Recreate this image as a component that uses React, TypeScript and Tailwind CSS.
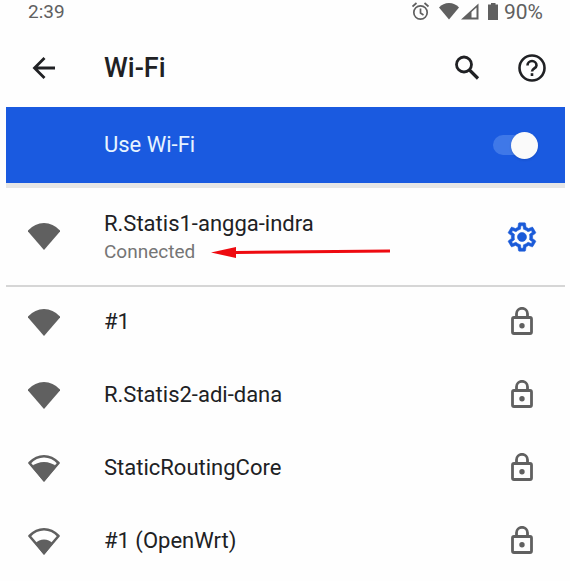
import React, { useState } from "react";

type Level = 2 | 3 | 4;

function WifiIcon({ level }: { level: Level }) {
  return (
    <svg className="w-8 shrink-0 text-[#606060]" viewBox="0 0 32 27" fill="currentColor" aria-hidden="true">
      {level === 4 && <path d="M16 27 0 8.500V7.500Q7 0 16 0t16 7.500V8.500Z" />}
      {level !== 4 && (
        <path d="M16 25 1.500 8Q8 1.300 16 1.300T30.500 8Z" fill="none" stroke="currentColor" strokeWidth="2.600" strokeLinejoin="round" />
      )}
      {level === 3 && <path d="M16 27 3.500 11.500Q9 7 16 7t12.500 4.500Z" />}
      {level === 2 && <path d="M16 27 7 15.500Q11 11.500 16 11.500t9 4Z" />}
    </svg>
  );
}

function LockIcon() {
  return (
    <svg className="mb-0.5 h-7 w-[22px] shrink-0 text-[#606060]" viewBox="0 0 22 28" fill="none" stroke="currentColor" strokeWidth="2.800" aria-hidden="true">
      <rect x="1.500" y="10.500" width="19" height="16" rx="1.500" />
      <path d="M5.500 10V6.800a5.500 5.500 0 0 1 11 0V10" />
      <circle cx="11" cy="18.800" r="2.700" fill="currentColor" stroke="none" />
    </svg>
  );
}

function GearIcon() {
  return (
    <svg className="size-[34px]" viewBox="0 0 24 24" fill="currentColor" stroke="currentColor" strokeWidth="0.400" aria-hidden="true">
      <path d="M19.430 12.980c.04-.32.070-.64.070-.98 0-.34-.03-.66-.07-.98l2.110-1.650c.19-.15.240-.42.120-.64l-2-3.460c-.09-.16-.26-.25-.44-.25-.06 0-.12.010-.17.030l-2.490 1c-.52-.4-1.080-.73-1.690-.98l-.38-2.650C14.460 2.180 14.250 2 14 2h-4c-.25 0-.46.180-.49.420l-.38 2.650c-.61.250-1.170.590-1.690.980l-2.490-1c-.06-.02-.12-.03-.18-.03-.17 0-.34.090-.43.250l-2 3.460c-.13.220-.07.490.120.640l2.110 1.650c-.04.320-.07.650-.07.980 0 .33.030.66.070.98l-2.110 1.650c-.19.150-.24.420-.12.640l2 3.460c.09.160.26.250.44.250.06 0 .12-.01.170-.03l2.490-1c.52.4 1.080.73 1.690.98l.38 2.650c.03.240.24.420.49.420h4c.25 0 .46-.18.490-.42l.38-2.650c.61-.25 1.170-.59 1.690-.98l2.490 1c.06.020.12.030.18.030.17 0 .34-.09.430-.25l2-3.460c.12-.22.070-.49-.12-.64l-2.110-1.650zm-1.980-1.710c.04.310.05.520.05.730 0 .21-.02.430-.05.730l-.14 1.130.89.700 1.080.84-.7 1.210-1.270-.51-1.040-.42-.9.680c-.43.320-.84.560-1.250.73l-1.060.43-.16 1.130-.2 1.350h-1.400l-.19-1.350-.16-1.130-1.060-.43c-.43-.18-.83-.41-1.230-.71l-.91-.7-1.060.43-1.270.51-.7-1.210 1.080-.84.89-.7-.14-1.130c-.03-.31-.05-.54-.05-.74s.020-.43.050-.73l.14-1.130-.89-.7-1.080-.84.700-1.210 1.270.51 1.040.42.900-.68c.43-.32.840-.56 1.250-.73l1.060-.43.160-1.130.200-1.350h1.390l.19 1.350.16 1.130 1.060.43c.43.180.83.410 1.230.71l.91.700 1.060-.43 1.270-.51.700 1.210-1.070.85-.89.700.14 1.130z" />
      <circle cx="12" cy="12" r="3.200" />
    </svg>
  );
}

function StatusIcons() {
  return (
    <svg className="h-5 w-[88px]" viewBox="0 0 88 20" fill="none" aria-hidden="true">
      <g stroke="currentColor" strokeWidth="1.700">
        <circle cx="8.500" cy="10.500" r="6.700" />
        <path d="M8.500 6.500V11l3 2M.5 4.500l4-3.500M16.500 4.500l-4-3.500" />
      </g>
      <g fill="currentColor">
        <path d="M37 17.500 27 5.500Q31 1 37 1t10 4.500Z" />
        <path d="M66.500 1.500v16H49ZM64.500 5.500 59.500 10v5.500h5Z" fillRule="evenodd" />
        <path d="M79 1h4.500v1.500H86V18H76V2.500h3Z" />
      </g>
    </svg>
  );
}

const networks: { name: string; level: Level }[] = [
  { name: "#1", level: 4 },
  { name: "R.Statis2-adi-dana", level: 4 },
  { name: "StaticRoutingCore", level: 3 },
  { name: "#1 (OpenWrt)", level: 2 },
];

export default function App() {
  const [enabled, setEnabled] = useState(true);
  return (
    <main className="min-h-screen bg-[#fefefe] pr-[5px] pl-1.5 font-['Roboto',sans-serif] text-[22px] leading-7 text-[#202124]">
      <div className="flex h-[29px] items-start justify-between pr-[22px] pl-[22px] text-[19px] leading-6 text-[#606060]">
        <span>2:39</span>
        <span className="flex items-center gap-1 text-[21px]">
          <StatusIcons />
          <span>90%</span>
        </span>
      </div>

      <header className="flex h-[78px] items-center pr-[19px] pl-[22px]">
        <button type="button" aria-label="Back" className="w-[76px]">
          <svg className="size-8" viewBox="0 0 32 32" fill="none" stroke="currentColor" strokeWidth="2.800" aria-hidden="true">
            <path d="M27 16H7M16.500 6 6.500 16l10 10" />
          </svg>
        </button>
        <h1 className="flex-1 text-[27px] leading-8 font-medium">Wi-Fi</h1>
        <button type="button" aria-label="Search" className="mr-[38px]">
          <svg className="size-[26px]" viewBox="0 0 26 26" fill="none" stroke="currentColor" strokeWidth="2.800" aria-hidden="true">
            <circle cx="10" cy="9.500" r="7.500" />
            <path d="m15 14.500 9 9" strokeWidth="3.200" />
          </svg>
        </button>
        <button type="button" aria-label="Help">
          <svg className="size-7" viewBox="0 0 28 28" fill="none" stroke="currentColor" strokeWidth="2.600" aria-hidden="true">
            <circle cx="14" cy="14" r="12.500" />
            <path d="M9.500 11.500a4.500 4.500 0 1 1 9 0c0 2.800-4.500 3-4.500 6" />
            <path d="M14 19.200v2.800" />
          </svg>
        </button>
      </header>

      <label className="flex h-[76px] items-center justify-between bg-[#1a5ae0] pr-[26px] pl-[98px] text-[#e8f4ff]">
        <span>Use Wi-Fi</span>
        <span className="flex h-7 w-[46px] items-center">
          <input
            type="checkbox"
            role="switch"
            checked={enabled}
            onChange={(e) => setEnabled(e.target.checked)}
            className="peer sr-only"
          />
          <span className="flex h-5 w-10 items-center rounded-full bg-[#3f78e8] pl-0 peer-checked:pl-[18px]">
            <span className="size-[27px] shrink-0 rounded-full bg-[#fafafa] shadow" />
          </span>
        </span>
      </label>

      <section className="flex h-[104px] items-center border-t-[5px] border-b-2 border-t-[#e6e6e6] border-b-[#d6d6d6] pr-[26px] pl-[22px]">
        <WifiIcon level={4} />
        <div className="relative ml-11 flex-1">
          <p>R.Statis1-angga-indra</p>
          <p className="mt-0.5 text-[19px] leading-6 text-[#757575]">Connected</p>
          <svg className="absolute top-9 left-[107px] h-3 w-[179px] text-[#ee0a10]" viewBox="0 0 179 12" fill="currentColor" aria-hidden="true">
            <path d="M0 6.500 25 1v4l154-1.500v3L25 8v4Z" />
          </svg>
        </div>
        <button type="button" aria-label="Network settings" className="text-[#1a5ad8]">
          <GearIcon />
        </button>
      </section>

      <ul>
        {networks.map((n) => (
          <li key={n.name}>
            <button type="button" className="flex h-[73px] w-full items-center pr-8 pb-[3px] pl-[22px] text-left">
              <WifiIcon level={n.level} />
              <span className="ml-11 flex-1">{n.name}</span>
              <LockIcon />
            </button>
          </li>
        ))}
      </ul>
    </main>
  );
}
